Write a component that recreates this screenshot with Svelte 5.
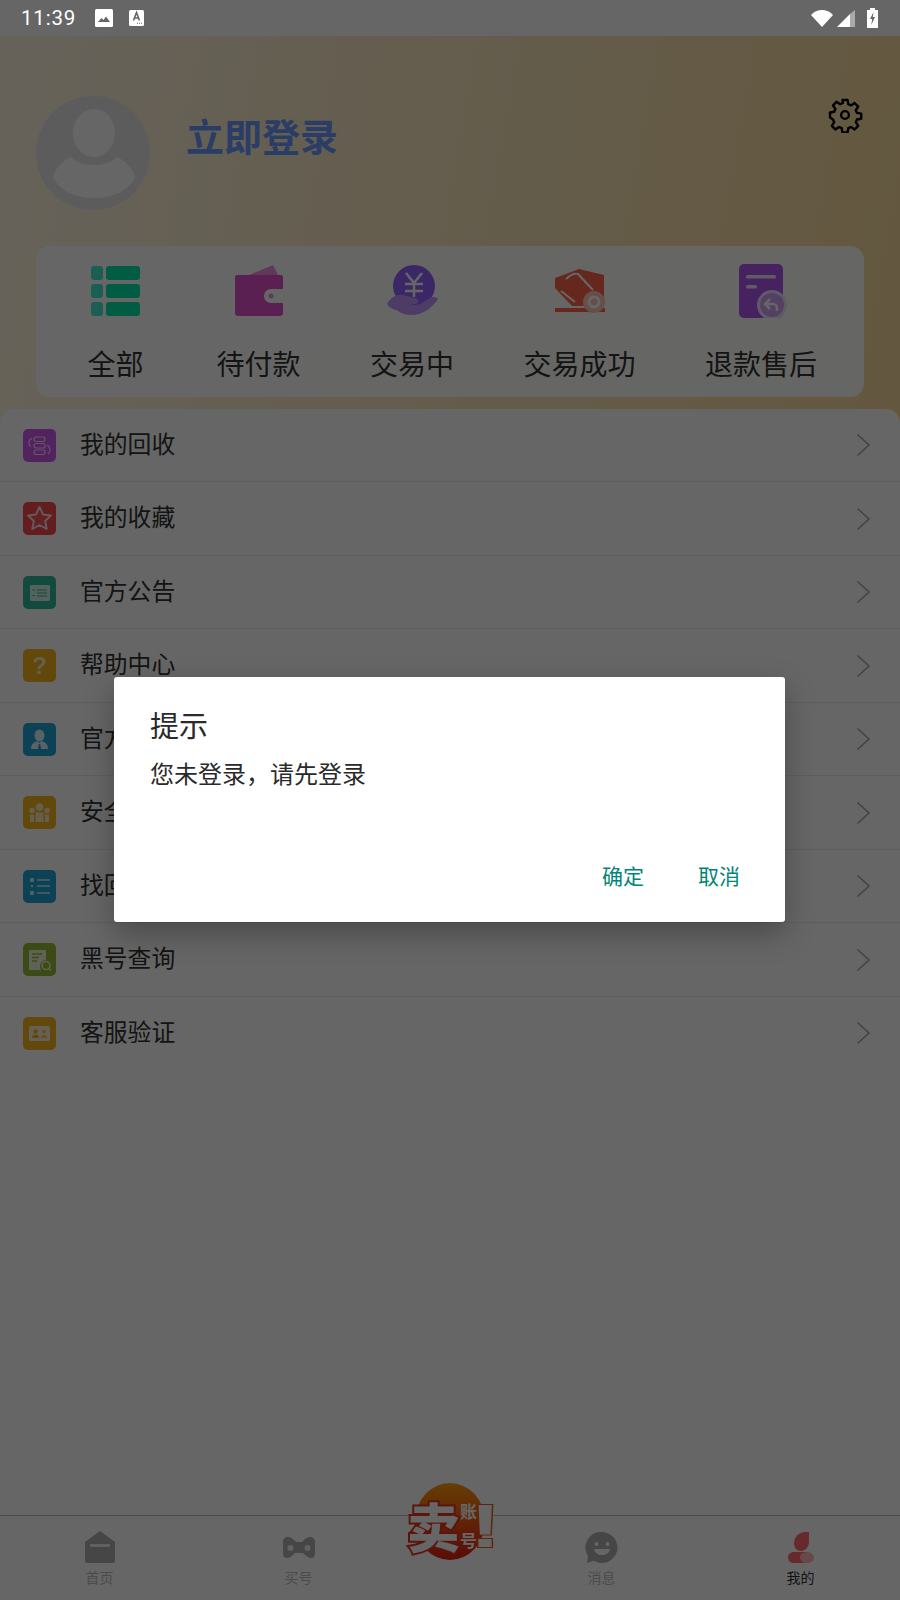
<script>
  const orders = [
    { name: '全部', icon: 'grid' },
    { name: '待付款', icon: 'wallet' },
    { name: '交易中', icon: 'yen' },
    { name: '交易成功', icon: 'deal' },
    { name: '退款售后', icon: 'refund' }
  ];

  const menu = [
    { name: '我的回收', color: '#cf57f0', icon: 'recycle' },
    { name: '我的收藏', color: '#f74a4e', icon: 'star' },
    { name: '官方公告', color: '#2fb89a', icon: 'notice' },
    { name: '帮助中心', color: '#f5b41c', icon: 'help' },
    { name: '官方客服', color: '#1ea4d8', icon: 'agent' },
    { name: '安全保障', color: '#f5b41c', icon: 'team' },
    { name: '找回记录', color: '#1ea4d8', icon: 'list' },
    { name: '黑号查询', color: '#97bb35', icon: 'search' },
    { name: '客服验证', color: '#f5b41c', icon: 'card' }
  ];

  const tabs = ['首页', '买号', null, '消息', '我的'];
</script>

<div class="page">
  <div class="statusbar">
    <span class="time">11:39</span>
    <svg class="st-img" viewBox="0 0 18 18"><rect width="18" height="18" rx="1.500" fill="#fff"/><path fill="#666" d="M3 13l3.500-4 2 2 2.500-3.500L15 13z"/></svg>
    <svg class="st-a" viewBox="0 0 15 16"><rect width="15" height="16" rx="1.500" fill="#fff"/><path fill="none" stroke="#666" stroke-width="1.600" d="M4.500 10.500l3-8 3 8M5.500 8h4"/><path fill="#666" d="M8 12.800h1v1H8zM10 12.800h1v1h-1zM12 12.800h1v1h-1z"/></svg>
    <span class="spacer"></span>
    <svg class="st-wifi" viewBox="0 0 22 17"><path fill="#fff" d="M0 5C3 1.800 7 0 11 0s8 1.800 11 5L11 17z"/></svg>
    <svg class="st-signal" viewBox="0 0 18 17"><path fill="#fff" d="M0 17L13 4v13z"/><path fill="#aaa" d="M13 4l5-4v17h-5z"/></svg>
    <svg class="st-batt" viewBox="0 0 11 20"><path fill="#fff" d="M3 0h5v2h3v18H0V2h3z"/><path fill="#666" d="M6.500 4L3 11h2.200L4.300 17 8 9H5.800z"/></svg>
  </div>

  <div class="content">
    <header class="head">
      <div class="user">
        <svg class="avatar" viewBox="0 0 114 114">
          <circle cx="57" cy="57" r="57" fill="#e6e6e6"/>
          <ellipse cx="58" cy="37" rx="21" ry="24" fill="#fff"/>
          <path fill="#fff" d="M35 61c5 5 13 8 23 8s18-3 23-8c10 5 17 13 18 21-8 13-22 20-41 20S25 95 17 82c1-8 8-16 18-21z"/>
        </svg>
        <span class="login">立即登录</span>
        <span class="spacer"></span>
        <svg class="gear" viewBox="0 0 24 24" fill="none" stroke="#000" stroke-width="1.600" stroke-linejoin="round">
          <path d="M10.300 2h3.400l.5 2.800 1.800.8 2.400-1.600 2.400 2.400-1.600 2.400.8 1.800 2.800.5v3.400l-2.800.5-.8 1.800 1.600 2.400-2.400 2.400-2.400-1.600-1.800.8-.5 2.800h-3.400l-.5-2.800-1.800-.8-2.400 1.600-2.400-2.400 1.600-2.400-.8-1.800L2 13.700v-3.400l2.800-.5.8-1.800L4 5.600 6.400 3.200l2.400 1.600 1.800-.8z"/>
          <circle cx="12" cy="12" r="2.600"/>
        </svg>
      </div>

      <div class="orders">
        {#each orders as o}
          <div class="order">
            <svg class="order-icon" viewBox="0 0 52 54">
              {#if o.icon === 'grid'}
                <rect x="1" y="2" width="12" height="14" rx="3" fill="#45ecd0"/>
                <rect x="16" y="2" width="34" height="14" rx="3" fill="#00e8a8"/>
                <rect x="1" y="20" width="12" height="14" rx="3" fill="#45ecd0"/>
                <rect x="16" y="20" width="34" height="14" rx="3" fill="#00e8a8"/>
                <rect x="1" y="38" width="12" height="14" rx="3" fill="#45ecd0"/>
                <rect x="16" y="38" width="34" height="14" rx="3" fill="#00e8a8"/>
              {:else if o.icon === 'wallet'}
                <path fill="#f090e0" d="M16 11L40 1l5 10z"/>
                <path fill="#e050cc" d="M4 11h44a2 2 0 0 1 2 2v12H38a7 7 0 0 0 0 14h12v10a3 3 0 0 1-3 3H5a3 3 0 0 1-3-3V13a2 2 0 0 1 2-2z"/>
                <circle cx="38" cy="32" r="2.500" fill="#f090e0"/>
              {:else if o.icon === 'yen'}
                <circle cx="28" cy="22" r="21" fill="#9560ff"/>
                <path fill="none" stroke="#fff" stroke-width="2.500" d="M20 9l8 10 8-10M19 20h18M19 27h18M28 19v14"/>
                <path fill="#c098ff" d="M1 40c4-7 10-10 16-9l12 3c4 1 5 5 1 6l-8 1c8 1 14-1 20-6 4-3 9-2 10 0-6 9-15 16-27 16-6 0-10-2-13-4-3-2-8-2-11-7z"/>
              {:else if o.icon === 'deal'}
                <path fill="#ff6248" d="M1 14L12 10 25 5l25 6v27l-12 4H18L1 24z"/>
                <path fill="none" stroke="#fff" stroke-width="2.200" d="M12 15c4-4 8-6 12-5l15 16M7 27l14 11"/>
                <rect x="1" y="44" width="50" height="4" fill="#ff6248"/>
                <circle cx="40" cy="38" r="11" fill="#ffc2b6"/>
                <circle cx="40" cy="38" r="5" fill="none" stroke="#fff" stroke-width="3"/>
              {:else if o.icon === 'refund'}
                <rect x="4" y="0" width="44" height="54" rx="5" fill="#b058f0"/>
                <rect x="11" y="11" width="30" height="3.500" rx="1.500" fill="#f1e1fb"/>
                <rect x="11" y="21" width="11" height="3.500" rx="1.500" fill="#f1e1fb"/>
                <circle cx="37" cy="41" r="15" fill="#f1e1fb"/>
                <circle cx="37" cy="41" r="12" fill="#d0a0f8"/>
                <path fill="none" stroke="#fff" stroke-width="2.500" d="M35 35l-5 5 5 5M30 40h8a4 4 0 0 1 4 4v3"/>
              {/if}
            </svg>
            <span>{o.name}</span>
          </div>
        {/each}
      </div>
    </header>

    <ul class="menu">
      {#each menu as m}
        <li class="row">
          <span class="m-icon" style="background: {m.color}">
            <svg viewBox="0 0 33 33">
              {#if m.icon === 'recycle'}
                <g fill="none" stroke="#f3d6fb" stroke-width="1.200">
                  <rect x="11" y="8" width="11" height="4.500" rx="2.200"/>
                  <rect x="11" y="14.500" width="11" height="4.500" rx="2.200"/>
                  <rect x="11" y="21" width="11" height="4.500" rx="2.200"/>
                  <path d="M9 9c-4 2-4 7-1 9M24 16c4 2 4 7 1 9"/>
                </g>
              {:else if m.icon === 'star'}
                <path fill="#ffb3b3" stroke="#ffdcdc" stroke-width="2" stroke-linejoin="round" d="M16.500 5l3.500 7.500 8 1-5.800 5.500 1.500 8-7.200-4-7.200 4 1.500-8L5 13.500l8-1z" fill-opacity=".1"/>
              {:else if m.icon === 'notice'}
                <rect x="7" y="9" width="20" height="16" rx="1.500" fill="#d4f3ec"/>
                <path stroke="#2fb89a" stroke-width="1" d="M14 14h10M14 17h10M14 20h10M9.500 14h2.500M9.500 19.500h2.500"/>
              {:else if m.icon === 'help'}
                <text class="q" x="16.500" y="25" text-anchor="middle">?</text>
              {:else if m.icon === 'agent'}
                <ellipse cx="16.500" cy="12.500" rx="5" ry="6" fill="#e0f4fc"/>
                <path fill="#e0f4fc" d="M8 26c0-5 3-7 6.500-8l2 2 2-2c3.500 1 6.500 3 6.500 8z"/>
                <path fill="#1ea4d8" d="M15.700 21h1.600l.7 5h-3z"/>
              {:else if m.icon === 'team'}
                <circle cx="16.500" cy="11" r="3.800" fill="#fdecc0"/>
                <circle cx="9" cy="14.500" r="2.800" fill="#fdecc0"/>
                <circle cx="24" cy="14.500" r="2.800" fill="#fdecc0"/>
                <path fill="#fdecc0" d="M12.500 16.500h8v9.500h-8zM7 18.500h4v7.500H7zM22 18.500h4v7.500h-4z"/>
              {:else if m.icon === 'list'}
                <rect x="7" y="8" width="4" height="4" rx="1" fill="#cdeefa"/>
                <rect x="7" y="21" width="4" height="4" rx="1" fill="#cdeefa"/>
                <rect x="8" y="15" width="2" height="2" fill="#cdeefa"/>
                <path stroke="#cdeefa" stroke-width="1.300" d="M14 10h13M14 16h13M14 23h13"/>
              {:else if m.icon === 'search'}
                <path fill="#eef6d6" d="M7 7h15a1 1 0 0 1 1 1v9a6.500 6.500 0 0 0-5 10H7a1 1 0 0 1-1-1V8a1 1 0 0 1 1-1z"/>
                <path stroke="#97bb35" stroke-width="1.300" d="M9 11h10M9 14.500h7M9 18h5"/>
                <circle cx="23" cy="22.500" r="4" fill="none" stroke="#eef6d6" stroke-width="1.500"/>
                <path stroke="#eef6d6" stroke-width="1.500" d="M26 25.500l2 2"/>
              {:else if m.icon === 'card'}
                <rect x="6" y="9" width="21" height="15" rx="1.500" fill="#fdf0cf"/>
                <circle cx="12.500" cy="14.500" r="2.200" fill="#f5b41c"/>
                <path fill="#f5b41c" d="M9 21c0-2.500 1.500-3.500 3.500-3.500s3.500 1 3.500 3.500z"/>
                <circle cx="21" cy="14.500" r="1.800" fill="#f5b41c" opacity=".7"/>
                <path fill="#f5b41c" opacity=".7" d="M18 21c0-2 1.200-3 3-3s3 1 3 3z"/>
              {/if}
            </svg>
          </span>
          <span class="m-name">{m.name}</span>
          <svg class="chev" viewBox="0 0 15 24"><path fill="none" stroke="#a8a8a8" stroke-width="1.600" d="M1.500 1.500L13 12 1.500 22.500"/></svg>
        </li>
      {/each}
    </ul>

    <nav class="tabbar">
      {#each tabs as t, i}
        {#if t}
          <div class="tab" class:active={i === 4}>
            <svg viewBox="0 0 34 34">
              {#if i === 0}
                <path fill="#b0b0b0" d="M17 1l15 11v18a3 3 0 0 1-3 3H5a3 3 0 0 1-3-3V12z"/>
                <rect x="7" y="14" width="20" height="3" fill="#fff" opacity=".8"/>
              {:else if i === 1}
                <g transform="translate(1 6)">
                  <path fill="#b0b0b0" d="M5 1C2 1 0 3 0 6v12c0 3 2 4 4 4s4-1 6-3l2-2h8l2 2c2 2 4 3 6 3s4-1 4-4V6c0-3-2-5-5-5-2 0-4 1-6 3l-2 2h-6l-2-2C9 2 7 1 5 1z"/>
                  <circle cx="7.500" cy="12" r="3" fill="#fff" opacity=".85"/>
                  <circle cx="24.500" cy="12" r="3" fill="#fff" opacity=".85"/>
                </g>
              {:else if i === 3}
                <path fill="#b0b0b0" d="M17 2a15.500 15.500 0 1 1-8 28.800L2 33l1-7A15.500 15.500 0 0 1 17 2z"/>
                <circle cx="11.500" cy="14" r="2" fill="#fff"/>
                <circle cx="22.500" cy="14" r="2" fill="#fff"/>
                <path fill="#fff" d="M9 19h16c-1 4-4 6-8 6s-7-2-8-6z"/>
              {:else}
                <path fill="#ff6a72" d="M25 2v10c0 5-4 9-8 9-4 0-7-3-7-8 0-6 5-11 11-11z"/>
                <rect x="4" y="22" width="24" height="11" rx="5.500" fill="#ff6a72"/>
                <ellipse cx="23" cy="27.500" rx="7" ry="5.500" fill="#ffb8bc"/>
              {/if}
            </svg>
            <span>{t}</span>
          </div>
        {:else}
          <div></div>
        {/if}
      {/each}
    </nav>
  </div>

  <div class="logo">
    <div class="disc"></div>
    <span class="mai">卖</span>
    <span class="zhang">账</span>
    <span class="hao">号</span>
    <span class="bang">!</span>
  </div>

  <div class="scrim"></div>

  <div class="dialog">
    <h2>提示</h2>
    <p>您未登录，请先登录</p>
    <div class="actions">
      <span>确定</span>
      <span>取消</span>
    </div>
  </div>
</div>

<style>
  :global(body) {
    margin: 0;
    background: #fff;
  }

  .page {
    position: relative;
    width: 900px;
    height: 1600px;
    overflow: hidden;
    display: flex;
    flex-direction: column;
    font-family: "Noto Sans CJK SC", "Noto Sans", sans-serif;
  }

  .statusbar {
    position: relative;
    z-index: 3;
    height: 36px;
    flex: none;
    background: #666;
    display: flex;
    align-items: center;
    padding: 0 22px 0 21px;
    color: #fff;
  }

  .time {
    font: 20.500px Roboto, sans-serif;
    letter-spacing: .8px;
    margin-right: 19px;
  }

  .st-img { width: 18px; height: 18px; margin-right: 16px; }
  .st-a { width: 15px; height: 16px; }
  .st-wifi { width: 22px; height: 17px; margin-right: 4px; }
  .st-signal { width: 18px; height: 17px; margin-right: 12px; }
  .st-batt { width: 11px; height: 20px; }
  .spacer { flex: 1; }

  .content {
    flex: 1;
    display: flex;
    flex-direction: column;
    background: #fff;
  }

  .head {
    height: 409px;
    margin-bottom: -36px;
    box-sizing: border-box;
    padding: 60px 36px 0;
    background: linear-gradient(100deg, #fff6e2, #f8da9c);
  }

  .user {
    display: flex;
    align-items: flex-start;
    height: 150px;
  }

  .avatar { width: 114px; height: 114px; }

  .login {
    margin: 12px 0 0 36px;
    font-size: 38px;
    line-height: 54px;
    font-weight: 700;
    color: #6a98ff;
  }

  .gear {
    width: 36px;
    height: 36px;
    position: relative;
    top: 1px;
    left: -1px;
  }

  .orders {
    height: 151px;
    box-sizing: border-box;
    padding: 18px 0 0 48px;
    display: flex;
    gap: 69.5px;
    border-radius: 14px;
    background: rgba(255, 255, 255, .97);
  }

  .order {
    display: flex;
    flex-direction: column;
    align-items: center;
    gap: 25px;
  }

  .order:first-child { width: 63px; }

  .order-icon { width: 52px; height: 54px; flex: none; }

  .order span {
    font-size: 28px;
    line-height: 40px;
    color: #333;
    white-space: nowrap;
  }

  .menu {
    list-style: none;
    margin: 0;
    padding: 0;
    height: 1106px;
    flex: none;
    box-sizing: border-box;
    background: #fff;
    border-radius: 14px 14px 0 0;
  }

  .row {
    height: 73.470px;
    box-sizing: border-box;
    padding: 0 29px 0 23px;
    display: flex;
    align-items: center;
    border-bottom: 1px solid #ececec;
  }

  .row:nth-child(9) { border-bottom: 0; }

  .m-icon {
    width: 33px;
    height: 33px;
    border-radius: 5px;
    flex: none;
    display: flex;
  }

  .m-icon svg { width: 33px; height: 33px; }

  .q {
    font: 700 24px "Liberation Sans", sans-serif;
    fill: #fdecc0;
  }

  .m-name {
    flex: 1;
    margin: 0 0 6px 24px;
    font-size: 23.800px;
    color: #333;
  }

  .chev { width: 15px; height: 24px; }

  .tabbar {
    flex: 1;
    display: grid;
    grid-template-columns: 199px 199px 104px 199px 199px;
    border-top: 1px solid #b8b8b8;
    box-sizing: border-box;
    background: #fff;
  }

  .tab {
    display: flex;
    flex-direction: column;
    align-items: center;
    padding-top: 14px;
  }

  .tab svg { width: 34px; height: 34px; }

  .tab span {
    font-size: 14px;
    line-height: 20px;
    margin-top: 3px;
    color: #bbb;
  }

  .tab.active span { color: #333; }

  .logo {
    position: absolute;
    left: 405px;
    top: 1480px;
    width: 96px;
    height: 86px;
  }

  .disc {
    position: absolute;
    left: 10px;
    top: 3px;
    width: 70px;
    height: 77px;
    border-radius: 50%;
    background: linear-gradient(#ff9a0a, #f03c14 70%, #e02010);
    box-shadow: 0 -2px 0 1px #fff;
  }

  .mai, .zhang, .hao, .bang {
    position: absolute;
    font-weight: 900;
    color: #fff;
    line-height: 1;
  }

  .mai {
    left: 2px;
    top: 19px;
    font-size: 53px;
    -webkit-text-stroke: 4px #e8321a;
    paint-order: stroke fill;
  }

  .zhang {
    left: 55px;
    top: 22px;
    font-size: 17px;
    font-weight: 700;
  }

  .hao {
    left: 55px;
    top: 51px;
    font-size: 17px;
    font-weight: 700;
  }

  .bang {
    left: 70px;
    top: 15px;
    font: 900 62px/1 "Liberation Sans", sans-serif;
    transform: scaleX(1.5);
    -webkit-text-stroke: 2px #ee5a1a;
    paint-order: stroke fill;
  }

  .scrim {
    position: absolute;
    inset: 0;
    z-index: 2;
    background: rgba(0, 0, 0, .6);
  }

  .dialog {
    position: absolute;
    z-index: 4;
    left: 114px;
    top: 677px;
    width: 671px;
    height: 245px;
    box-sizing: border-box;
    padding: 25px 36px 0;
    border-radius: 3px;
    background: #fff;
    box-shadow: 0 12px 30px rgba(0, 0, 0, .28);
    display: flex;
    flex-direction: column;
  }

  .dialog h2 {
    margin: 0;
    font-size: 29px;
    line-height: 44px;
    font-weight: 400;
    color: #2a2a2a;
  }

  .dialog p {
    margin: 9px 0 0;
    font-size: 24px;
    line-height: 36px;
    color: #2a2a2a;
  }

  .actions {
    margin-top: auto;
    display: flex;
    justify-content: flex-end;
    gap: 54px;
    padding: 0 9px 32px 0;
    font-size: 21px;
    line-height: 30px;
    color: #008577;
  }
</style>
